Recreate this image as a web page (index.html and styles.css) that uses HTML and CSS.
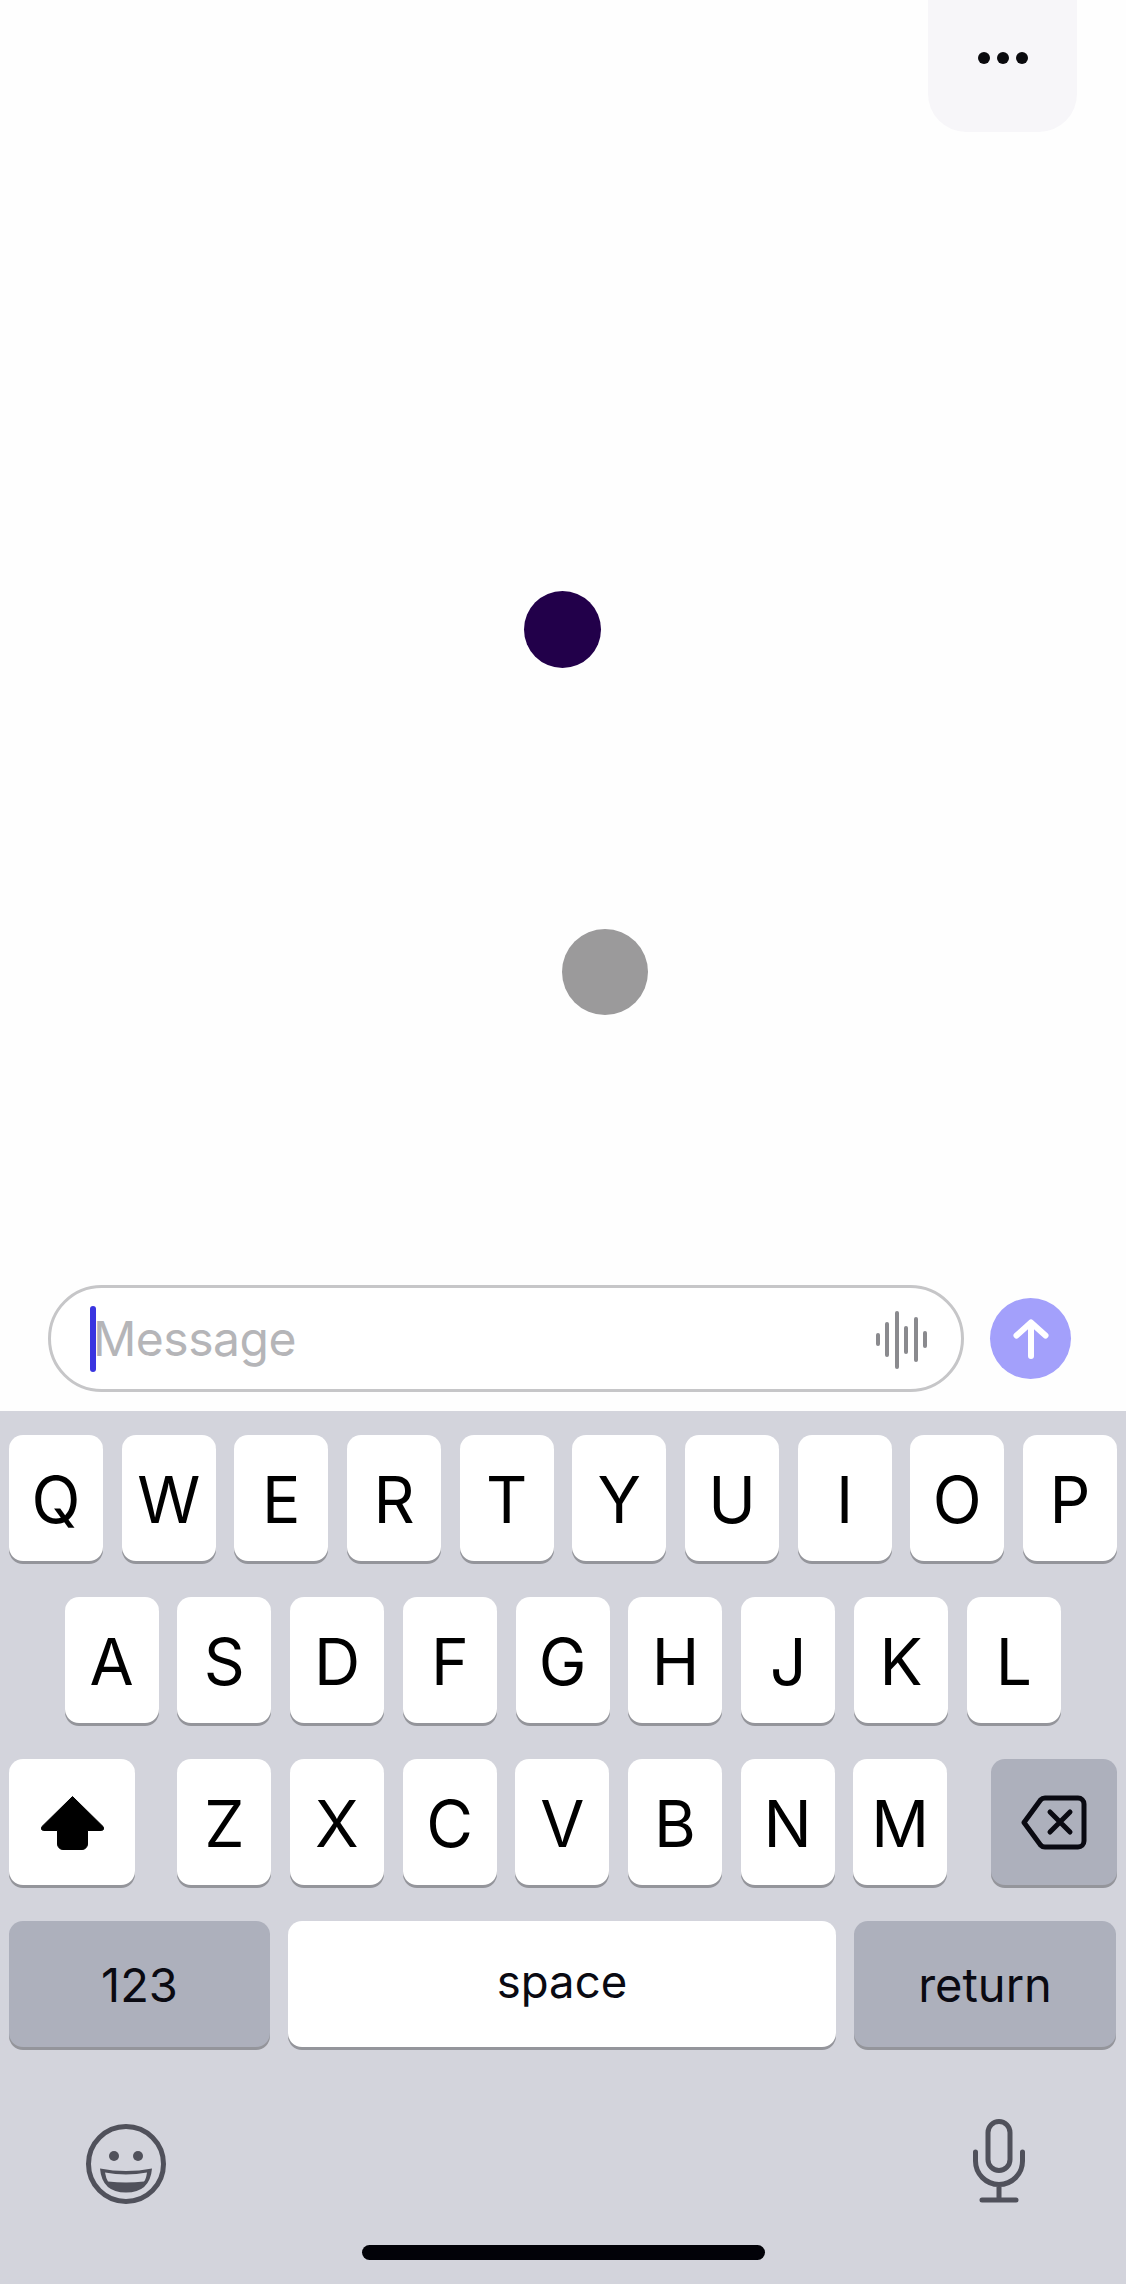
FILE: index.html
```html
<!DOCTYPE html>
<html lang="en">
<head>
<meta charset="utf-8">
<title>Message</title>
<link rel="stylesheet" href="styles.css">
</head>
<body>
<main class="chat">
  <div class="topbar">
    <button class="menu" aria-label="More">
      <span class="menu-dot"></span><span class="menu-dot"></span><span class="menu-dot"></span>
    </button>
  </div>
  <div class="dots">
    <span class="dot dot-dark"></span>
    <span class="dot dot-grey"></span>
  </div>
  <div class="composer">
    <div class="field">
      <span class="caret"></span>
      <span class="placeholder">Message</span>
      <span class="wave">
        <i class="bar b1"></i><i class="bar b2"></i><i class="bar b3"></i><i class="bar b4"></i><i class="bar b5"></i><i class="bar b6"></i>
      </span>
    </div>
    <button class="send" aria-label="Send">
      <svg width="36" height="42" viewBox="0 0 36 42" fill="none" stroke="#fff" stroke-width="6" stroke-linecap="round" stroke-linejoin="round"><path d="M18 38V5M3.500 17.500 18 4.500l14.500 13"/></svg>
    </button>
  </div>
</main>
<section class="keyboard">
  <div class="row">
    <div class="key">Q</div><div class="key">W</div><div class="key">E</div><div class="key">R</div><div class="key">T</div><div class="key">Y</div><div class="key">U</div><div class="key">I</div><div class="key">O</div><div class="key">P</div>
  </div>
  <div class="row row-home">
    <div class="key">A</div><div class="key">S</div><div class="key">D</div><div class="key">F</div><div class="key">G</div><div class="key">H</div><div class="key">J</div><div class="key">K</div><div class="key">L</div>
  </div>
  <div class="row row-shift">
    <div class="key key-wide">
      <svg width="63" height="55" viewBox="0 0 63 55"><path d="M31.500 1.500 62 31.500a2.300 2.300 0 0 1-1.700 4H46.500V49a5.500 5.500 0 0 1-5.500 5.500H22a5.500 5.500 0 0 1-5.500-5.500V35.500H2.700a2.300 2.300 0 0 1-1.700-4z" fill="#000" stroke="#000" stroke-width="1" stroke-linejoin="round"/></svg>
    </div>
    <div class="letters">
      <div class="key">Z</div><div class="key">X</div><div class="key">C</div><div class="key">V</div><div class="key">B</div><div class="key">N</div><div class="key">M</div>
    </div>
    <div class="key key-wide key-grey">
      <svg width="66" height="55" viewBox="0 0 66 55" fill="none" stroke="#0a0a12" stroke-width="5" stroke-linecap="round" stroke-linejoin="round"><path d="M24 3h33a6 6 0 0 1 6 6v37a6 6 0 0 1-6 6H24a6 6 0 0 1-4.500-2L3 27.500 19.500 5A6 6 0 0 1 24 3z"/><path d="M29 17l20 20M49 17 29 37"/></svg>
    </div>
  </div>
  <div class="row row-bottom">
    <div class="key key-small key-grey key-123">123</div>
    <div class="key key-small key-space">space</div>
    <div class="key key-small key-grey key-return">return</div>
  </div>
  <div class="tools">
    <svg class="emoji" width="84" height="84" viewBox="0 0 84 84" fill="none"><circle cx="42" cy="42" r="37.500" stroke="#50515b" stroke-width="5"/><circle cx="30" cy="34" r="5" fill="#50515b"/><circle cx="54" cy="34" r="5" fill="#50515b"/><path d="M16 46.500q26 5 52 0q-2 24-26 24t-26-24z" fill="#50515b"/><path d="M21 50.500q21 4 42 0q-1 7-3 9q-18 2-36 0q-2-3-3-9z" fill="#d4d5dd"/></svg>
    <svg width="52" height="85" viewBox="0 0 52 85" fill="none" stroke="#50515b" stroke-width="5" stroke-linecap="round"><rect x="15" y="2.500" width="22" height="49" rx="11"/><path d="M2.500 33v9a23.500 23.500 0 0 0 47 0v-9M26 65.500V81M9 81h34"/></svg>
  </div>
  <div class="home"></div>
</section>
</body>
</html>
```
FILE: styles.css
```css
* { box-sizing: border-box; }
html, body { margin: 0; padding: 0; }
body {
  width: 1126px;
  height: 2284px;
  background: #fefefe;
  font-family: Inter, "Liberation Sans", sans-serif;
  overflow: hidden;
}
button { border: 0; padding: 0; font: inherit; }

.chat { height: 1411px; display: flex; flex-direction: column; }

.topbar { height: 132px; display: flex; justify-content: flex-end; padding-right: 49px; }
.menu {
  width: 149px;
  height: 132px;
  background: #f7f6f9;
  border-radius: 0 0 38px 38px;
  display: flex;
  justify-content: center;
  align-items: center;
  gap: 7px;
  padding-bottom: 16px;
}
.menu-dot { width: 12px; height: 12px; border-radius: 50%; background: #0a0a0e; }

.dots { flex: 1; display: flex; flex-direction: column; padding-top: 459px; }
.dot { display: block; border-radius: 50%; }
.dot-dark { width: 77px; height: 77px; margin-left: 524px; background: #22004a; }
.dot-grey { width: 86px; height: 86px; margin-left: 561.500px; margin-top: 261px; background: #9b9a9b; }

.composer { display: flex; align-items: center; height: 107px; margin-bottom: 19px; padding-left: 48px; gap: 26px; }
.field {
  width: 916px;
  height: 107px;
  border: 3px solid #c6c6c8;
  border-radius: 54px;
  display: flex;
  align-items: center;
  padding-left: 39px;
  padding-right: 34px;
  background: #fff;
}
.caret { width: 6px; height: 66px; border-radius: 3px; background: #3a35e0; flex: none; }
.placeholder { flex: 1; font-size: 48px; color: #b5b5b8; line-height: 66px; margin-left: -3px; letter-spacing: -0.5px; }
.wave { display: flex; align-items: center; gap: 5.400px; margin-top: 2px; }
.bar { display: block; width: 4px; border-radius: 2px; background: #8a8a8e; }
.b1 { height: 13px; }
.b2 { height: 35px; }
.b3 { height: 58px; }
.b4 { height: 28px; }
.b5 { height: 45px; }
.b6 { height: 17px; }
.send {
  width: 81px;
  height: 81px;
  border-radius: 50%;
  background: #a3a0fb;
  display: flex;
  align-items: center;
  justify-content: center;
}

.keyboard { height: 873px; background: #d3d4dc; display: flex; flex-direction: column; padding: 24px 9px 0; }
.row { display: flex; gap: 18.670px; height: 127px; margin-bottom: 35px; }
.row-home { padding-left: 55.500px; gap: 18.800px; }
.row-shift { justify-content: space-between; gap: 0; }
.row-bottom { gap: 18px; margin-bottom: 0; }
.letters { display: flex; gap: 18.670px; margin-right: 1.500px; }
.key {
  width: 94px;
  height: 126px;
  background: #fff;
  border-radius: 14px;
  box-shadow: 0 3px 0 #94959b;
  display: flex;
  align-items: center;
  justify-content: center;
  font-size: 64px;
  color: #000;
  padding-top: 3px;
  flex: none;
}
.key-wide { width: 126px; padding-top: 1px; }
.key-grey { background: #adb0bc; }
.key-small { font-size: 47px; color: #0a0a12; padding-top: 1px; }
.key-123 { width: 261px; }
.key-space { width: 548px; font-size: 45.500px; padding-top: 0; padding-bottom: 5px; }
.key-return { width: 262px; }

.tools { display: flex; justify-content: space-between; align-items: flex-start; padding: 71px 92.500px 0 75px; height: 197px; }
.emoji { margin-top: 3px; }
.home { width: 403px; height: 15px; border-radius: 7.500px; background: #020208; align-self: center; }
```
